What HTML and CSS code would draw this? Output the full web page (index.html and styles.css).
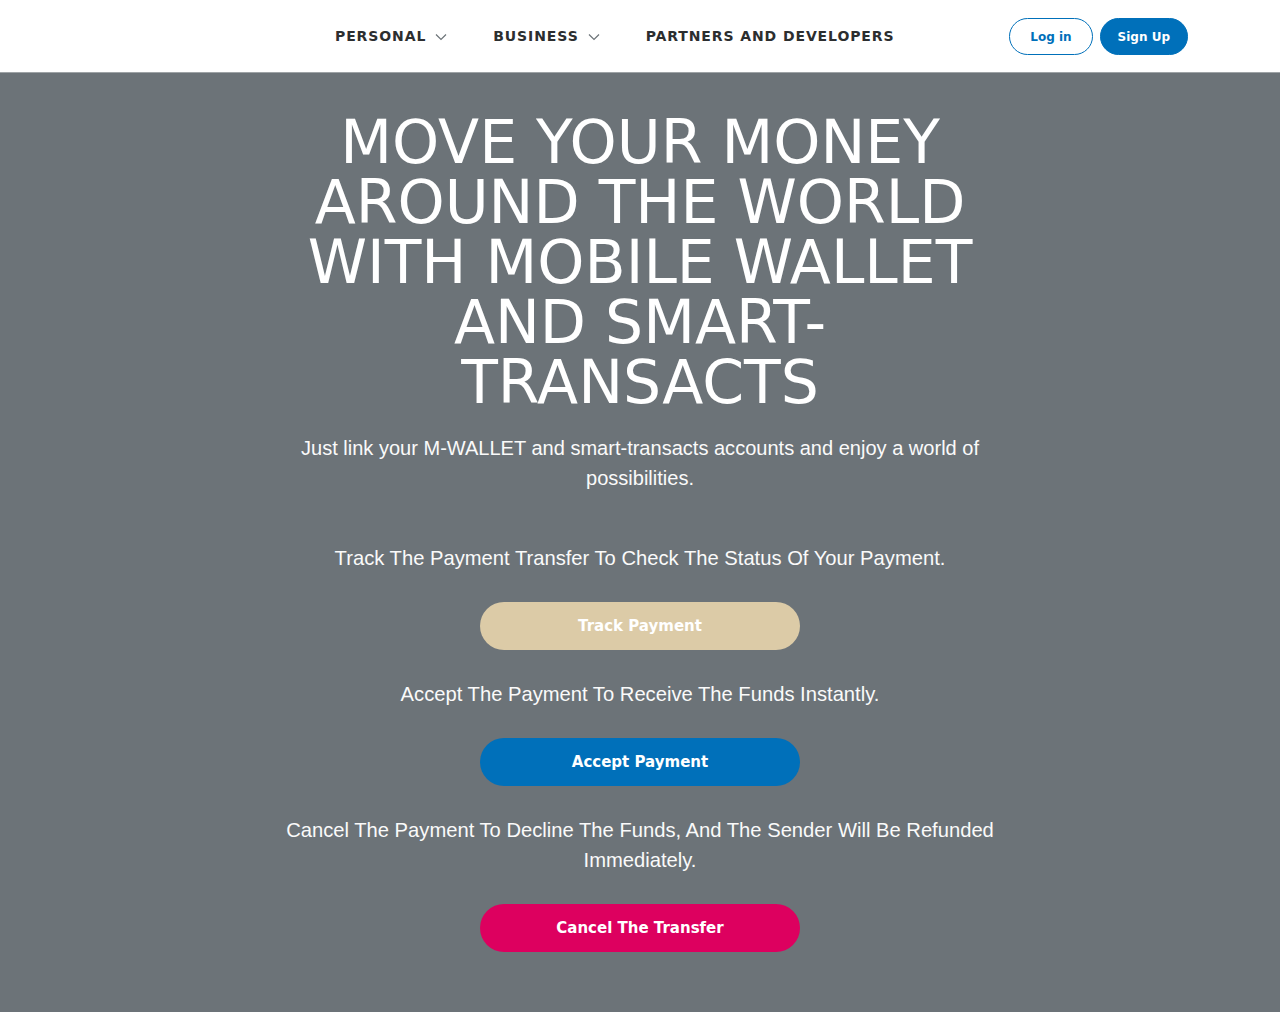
FILE: index.html
```html
<!DOCTYPE html>
<html lang="en">
<head>
<meta charset="utf-8">
<title>Mobile Wallet</title>
<link rel="stylesheet" href="styles.css">
</head>
<body>
<header class="site-header">
  <nav class="main-nav">
    <a class="nav-item" href="#">PERSONAL
      <svg class="chev" width="12" height="8" viewBox="0 0 12 8"><path d="M1 1.5 L6 6.5 L11 1.5" fill="none" stroke="#6c7378" stroke-width="1.2"/></svg>
    </a>
    <a class="nav-item" href="#">BUSINESS
      <svg class="chev" width="12" height="8" viewBox="0 0 12 8"><path d="M1 1.5 L6 6.5 L11 1.5" fill="none" stroke="#6c7378" stroke-width="1.2"/></svg>
    </a>
    <a class="nav-item" href="#">PARTNERS AND DEVELOPERS</a>
  </nav>
  <div class="auth">
    <a class="btn-login" href="#">Log in</a>
    <a class="btn-signup" href="#">Sign Up</a>
  </div>
</header>
<main class="hero">
  <h1 class="hero-title">MOVE YOUR MONEY AROUND THE WORLD WITH MOBILE WALLET AND SMART-TRANSACTS</h1>
  <p class="lead">Just link your M-WALLET and smart-transacts accounts and enjoy a world of possibilities.</p>
  <div class="actions">
    <p class="action-text">Track The Payment Transfer To Check The Status Of Your Payment.</p>
    <a class="pill pill-track" href="#">Track Payment</a>
    <p class="action-text">Accept The Payment To Receive The Funds Instantly.</p>
    <a class="pill pill-accept" href="#">Accept Payment</a>
    <p class="action-text">Cancel The Payment To Decline The Funds, And The Sender Will Be Refunded Immediately.</p>
    <a class="pill pill-cancel" href="#">Cancel The Transfer</a>
  </div>
</main>
</body>
</html>
```

FILE: styles.css
```css
* { box-sizing: border-box; }
html, body { margin: 0; padding: 0; background: #fff; }
body { font-family: "DejaVu Sans", sans-serif; }
a { text-decoration: none; }

.site-header {
  height: 73px;
  display: flex;
  align-items: center;
  padding: 0 92px 0 335px;
  background: #fff;
  border-bottom: 1px solid #9ea3a6;
}
.main-nav {
  display: flex;
  align-items: center;
  gap: 46px;
  flex: 1;
}
.nav-item {
  display: flex;
  align-items: center;
  gap: 9px;
  font-family: "DejaVu Sans", sans-serif;
  font-weight: bold;
  font-size: 14px;
  letter-spacing: 0.9px;
  color: #2c2e2f;
}
.chev { display: block; margin-top: 1px; }
.auth { display: flex; gap: 7px; }
.btn-login, .btn-signup {
  height: 37px;
  display: flex;
  align-items: center;
  border-radius: 19px;
  border: 1px solid #0070ba;
  font-family: "DejaVu Sans", sans-serif;
  font-weight: bold;
  font-size: 12px;
  margin-top: 1px;
}
.btn-login { padding: 0 20px; color: #0070ba; background: #fff; }
.btn-signup { padding: 0 17px; color: #fff; background: #0070ba; }

.hero {
  background: #6c7378;
  padding: 39px 0 60px;
  display: flex;
  flex-direction: column;
  align-items: center;
  color: #fff;
}
.hero-title {
  margin: 0;
  max-width: 680px;
  text-align: center;
  font-family: "DejaVu Sans", sans-serif;
  font-weight: normal;
  font-size: 60px;
  line-height: 60px;
  color: #fff;
}
.lead {
  margin: 21px 0 0;
  max-width: 720px;
  text-align: center;
  font-family: "Liberation Sans", Arial, sans-serif;
  font-size: 20.05px;
  line-height: 30px;
  color: #fafafa;
}
.actions {
  margin-top: 50px;
  display: flex;
  flex-direction: column;
  align-items: center;
  gap: 29px;
  max-width: 720px;
}
.action-text {
  margin: 0;
  text-align: center;
  font-family: "Liberation Sans", Arial, sans-serif;
  font-size: 20.2px;
  line-height: 30px;
  color: #fafafa;
}
.pill {
  width: 320px;
  height: 48px;
  border-radius: 24px;
  display: flex;
  align-items: center;
  justify-content: center;
  font-family: "DejaVu Sans", sans-serif;
  font-weight: bold;
  font-size: 15px;
  color: #fff;
}
.pill-track { background: #dccba7; }
.pill-accept { background: #0070ba; }
.pill-cancel { background: #dd005f; }
```
